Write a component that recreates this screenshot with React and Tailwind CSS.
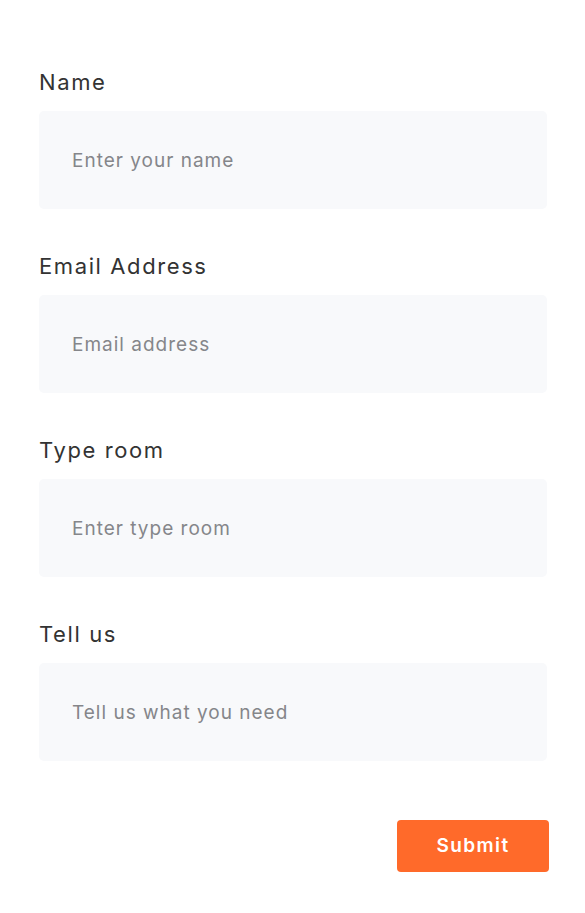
import { useState } from "react";

const fields = [
  { id: "name", label: "Name", placeholder: "Enter your name" },
  { id: "email", label: "Email Address", placeholder: "Email address" },
  { id: "room", label: "Type room", placeholder: "Enter type room" },
  { id: "tell", label: "Tell us", placeholder: "Tell us what you need" },
];

export default function App() {
  const [values, setValues] = useState({});

  return (
    <div className="min-h-screen bg-white font-['Inter',sans-serif]">
      <form
        className="flex flex-col pl-[39px] pr-[36px] pt-[67px]"
        onSubmit={(e) => e.preventDefault()}
      >
        {fields.map((f) => (
          <div key={f.id} className="flex flex-col mb-[42px]">
            <label
              htmlFor={f.id}
              className="text-[22px] leading-[30px] text-[#333333] font-normal tracking-[1.6px]"
            >
              {f.label}
            </label>
            <input
              id={f.id}
              type="text"
              placeholder={f.placeholder}
              value={values[f.id] || ""}
              onChange={(e) => setValues({ ...values, [f.id]: e.target.value })}
              className="mt-[14px] h-[98px] w-[508px] rounded-[5px] bg-[#f8f9fb] pl-[33px] text-[19px] tracking-[1px] text-[#333333] placeholder:text-[#85868a] outline-none"
            />
          </div>
        ))}
        <div className="flex justify-end mt-[17px]">
          <button
            type="submit"
            className="h-[52px] w-[152px] rounded-[4px] bg-[#ff6a2a] text-[19px] font-semibold tracking-[1.4px] text-white"
          >
            Submit
          </button>
        </div>
      </form>
    </div>
  );
}
